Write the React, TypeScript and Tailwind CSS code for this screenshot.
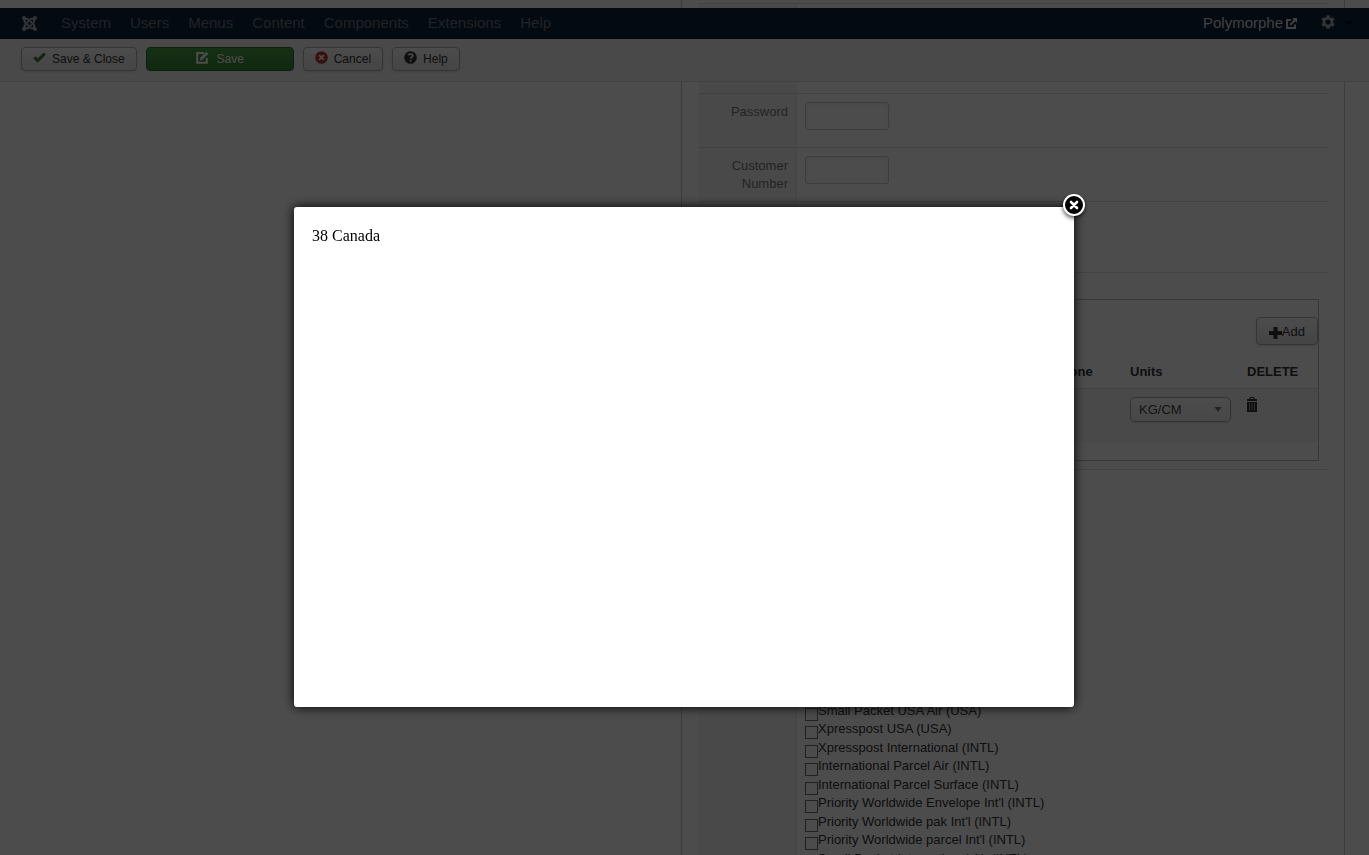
import React from "react";
import { FaJoomla } from "react-icons/fa";

const menu = ["System", "Users", "Menus", "Content", "Components", "Extensions", "Help"];

const services = [
  "Small Packet USA Air (USA)",
  "Xpresspost USA (USA)",
  "Xpresspost International (INTL)",
  "International Parcel Air (INTL)",
  "International Parcel Surface (INTL)",
  "Priority Worldwide Envelope Int'l (INTL)",
  "Priority Worldwide pak Int'l (INTL)",
  "Priority Worldwide parcel Int'l (INTL)",
  "Small Packet International Air (INTL)",
];

function ExternalIcon() {
  return (
    <svg width="11" height="11" viewBox="0 0 11 11" aria-hidden="true">
      <path d="M5 2H1v8h8V6.5M4.2 6.8L9 2" fill="none" stroke="#d9d9d9" strokeWidth="1.9" />
      <path d="M6 0h5v5z" fill="#d9d9d9" />
    </svg>
  );
}

function GearIcon() {
  return (
    <svg className="mb-0.5" width="14" height="14" viewBox="0 0 14 14" aria-hidden="true">
      <circle cx="7" cy="7" r="3.9" fill="none" stroke="#a9adb5" strokeWidth="2.6" />
      <path
        d="M7 .3v2.400M7 11.300v2.400M1.200 3.650l2.100 1.200M10.700 9.150l2.100 1.200M1.200 10.350l2.100-1.200M10.700 4.850l2.100-1.200"
        stroke="#a9adb5"
        strokeWidth="3.2"
      />
    </svg>
  );
}

function CheckIcon() {
  return (
    <svg width="13" height="11" viewBox="0 0 13 11" aria-hidden="true">
      <path d="M1.300 5.300l3.500 3.300L11.700 1.700" fill="none" stroke="#378137" strokeWidth="3.200" />
    </svg>
  );
}

function EditIcon() {
  return (
    <svg width="13" height="13" viewBox="0 0 13 13" aria-hidden="true">
      <path d="M8 1.900H1.200v9.900h9.600V7" fill="none" stroke="#fff" strokeWidth="2" />
      <path d="M3.800 9.400l.5-2.700L10.300.7l2.100 2.100-6 6z" fill="#fff" />
    </svg>
  );
}

function CancelIcon() {
  return (
    <svg width="13" height="13" viewBox="0 0 13 13" aria-hidden="true">
      <circle cx="6.500" cy="6.500" r="6.300" fill="#bd362f" />
      <path d="M4.100 4.100l4.800 4.800M8.900 4.100L4.100 8.900" stroke="#f5f5f5" strokeWidth="1.900" />
    </svg>
  );
}

function HelpIcon() {
  return (
    <svg width="13" height="13" viewBox="0 0 13 13" aria-hidden="true">
      <circle cx="6.500" cy="6.500" r="6.300" fill="#333" />
      <path d="M4.200 4.100c.6-1.400 4.600-1.500 4.600.8 0 1.400-2.200 1.300-2.200 2.900" fill="none" stroke="#f5f5f5" strokeWidth="1.700" />
      <path d="M5.700 8.900h1.800v1.700H5.700z" fill="#f5f5f5" />
    </svg>
  );
}

function PlusIcon() {
  return (
    <svg className="mt-0.5" width="13" height="12" viewBox="0 0 13 12" aria-hidden="true">
      <path d="M4.500 0h4v4H13v4H8.500v4h-4V8H0V4h4.500z" fill="#333" />
    </svg>
  );
}

function TrashIcon() {
  return (
    <svg width="10" height="15" viewBox="0 0 10 15" aria-hidden="true">
      <path d="M3 2V.500h4V2" fill="none" stroke="#333" />
      <path d="M0 2h10v2H0zM0 5h10v10H0z" fill="#333" />
      <path d="M2.500 6v7.500M5 6v7.500M7.500 6v7.500" stroke="#bbb" strokeWidth=".8" />
    </svg>
  );
}

const smallButton =
  "flex h-6 items-center gap-1.5 rounded-[4px] border border-[#b3b3b3] bg-linear-to-b from-white to-[#e6e6e6] px-[11px] text-xs text-[#333] shadow-sm [&>svg]:mb-[3px]";

function Row({ label, htmlFor, className = "", children }: { label?: string; htmlFor?: string; className?: string; children?: React.ReactNode }) {
  return (
    <div className={`grid grid-cols-[98px_minmax(0,1fr)] border-t border-[#ddd] ${className}`}>
      <div className="border-r border-[#e9e9e9] bg-[#f6f6f6] px-2 pt-[9px] text-right text-[#777]">
        {label && <label htmlFor={htmlFor}>{label}</label>}
      </div>
      <div className="p-2">{children}</div>
    </div>
  );
}

function Columns({ children }: { children: React.ReactNode }) {
  return (
    <div className="grid h-full grid-cols-[681fr_664fr] pr-6">
      <div />
      <div className="border-x border-[#ccc] pr-4 pl-[17px]">{children}</div>
    </div>
  );
}

const textInput = "block h-7 w-21 rounded-[3px] border border-[#ccc] bg-white px-1.5 shadow-inner";

export default function App() {
  return (
    <div className="relative flex h-screen flex-col overflow-hidden bg-white font-['Liberation_Sans',Arial,sans-serif] text-[13px] leading-[18px] text-[#333]">
      <div className="h-2 shrink-0 overflow-hidden">
        <Columns>
          <div className="h-[3px]" />
          <Row className="h-2" />
        </Columns>
      </div>

      <nav className="flex h-[31px] shrink-0 items-center border-b border-[#0d1b31] bg-[#10223e] pr-4 pl-[21px] text-[15px]">
        <a href="#home" aria-label="Control panel" className="mr-[23px] text-[#a9adb5]">
          <FaJoomla size={17} />
        </a>
        <ul className="flex flex-1 gap-[19px] text-[#6b727d]">
          {menu.map((m) => (
            <li key={m}>
              <a href={`#${m.toLowerCase()}`}>{m}</a>
            </li>
          ))}
        </ul>
        <a href="#site" className="mr-6 flex items-center gap-[3px] text-[#d9d9d9]">
          Polymorphe <ExternalIcon />
        </a>
        <button type="button" aria-label="User menu" className="flex items-center gap-[10px]">
          <GearIcon />
          <svg width="8" height="4" viewBox="0 0 8 4" aria-hidden="true">
            <path d="M0 0h8L4 4z" fill="#000" />
          </svg>
        </button>
      </nav>

      <div className="flex h-[43px] shrink-0 items-start gap-[9px] border-b border-[#ddd] bg-[#f5f5f5] pt-2 pl-[21px]">
        <button type="button" className={smallButton}>
          <CheckIcon /> Save &amp; Close
        </button>
        <button
          type="button"
          className="flex h-6 w-[148px] items-center justify-center gap-2 rounded-[4px] border border-[#2f6f2f] bg-linear-to-b from-[#46a546] to-[#378137] text-xs text-white [&>svg]:mb-[3px]"
        >
          <EditIcon /> Save
        </button>
        <button type="button" className={smallButton}>
          <CancelIcon /> Cancel
        </button>
        <button type="button" className={smallButton}>
          <HelpIcon /> Help
        </button>
      </div>

      <main className="min-h-0 flex-1">
        <Columns>
          <div className="flex h-full flex-col">
            <div className="grid h-[11px] shrink-0 grid-cols-[98px_minmax(0,1fr)]">
              <div className="border-r border-[#e9e9e9] bg-[#f6f6f6]" />
            </div>
            <Row label="Password" htmlFor="password" className="h-[54px] shrink-0">
              <input id="password" type="password" className={textInput} />
            </Row>
            <Row label="Customer Number" htmlFor="customer" className="h-[54px] shrink-0">
              <input id="customer" type="text" className={textInput} />
            </Row>
            <Row className="h-[71px] shrink-0" />
            <Row className="shrink-0">
              <div className="mt-[18px] mr-px border border-[#bbb] pt-[17px] pb-[17px]">
                <div className="flex justify-end">
                  <button
                    type="button"
                    className="flex h-7 items-center rounded-[4px] border border-[#b3b3b3] bg-linear-to-b from-white to-[#e6e6e6] px-3 pt-px shadow-sm"
                  >
                    <PlusIcon />
                    Add
                  </button>
                </div>
                <table className="mt-[9px] w-full table-fixed text-left">
                  <colgroup>
                    <col />
                    <col className="w-[77px]" />
                    <col className="w-[117px]" />
                    <col className="w-[79px]" />
                  </colgroup>
                  <thead>
                    <tr>
                      <td />
                      <th className="px-2 pt-[9px] pb-[7px] font-bold">Phone</th>
                      <th className="px-2 pt-[9px] pb-[7px] font-bold">Units</th>
                      <th className="px-2 pt-[9px] pb-[7px] font-bold">DELETE</th>
                    </tr>
                  </thead>
                  <tbody>
                    <tr className="h-[54px] border-t border-[#ddd] bg-[#f6f6f6] align-top">
                      <td />
                      <td />
                      <td className="p-2">
                        <div className="relative">
                          <select
                            aria-label="Units"
                            className="block h-[25px] w-full appearance-none rounded-[5px] border border-[#aaa] bg-linear-to-b from-white to-[#eee] px-2 pt-px text-[#444] shadow-sm"
                          >
                            <option>KG/CM</option>
                          </select>
                          <svg className="pointer-events-none absolute top-[10px] right-[9px]" width="8" height="5" viewBox="0 0 8 5" aria-hidden="true">
                            <path d="M.500 0h7L4 5z" fill="#777" />
                          </svg>
                        </div>
                      </td>
                      <td className="p-2">
                        <button type="button" aria-label="Delete" className="block">
                          <TrashIcon />
                        </button>
                      </td>
                    </tr>
                  </tbody>
                </table>
              </div>
            </Row>
            <Row className="min-h-0 flex-1">
              <ul className="mt-[224px] grid h-[167px] auto-rows-fr">
                {services.map((s) => (
                  <li key={s}>
                    <label className="flex items-start">
                      <input type="checkbox" className="mt-[6px] h-[13px] w-[13px] shrink-0 appearance-none border border-[#707070] bg-white" />
                      <span className="whitespace-nowrap">{s}</span>
                    </label>
                  </li>
                ))}
              </ul>
            </Row>
          </div>
        </Columns>
      </main>

      <div className="fixed inset-0 flex items-start justify-center bg-black/70 pt-[207px] pr-px">
        <div
          role="dialog"
          aria-label="Country"
          className="relative h-[500px] w-[780px] rounded-[3px] bg-white px-[18px] pt-5 font-['Liberation_Serif','Times_New_Roman',serif] text-base leading-[18px] text-black shadow-[0_0_12px_#000]"
        >
          38 Canada
          <button type="button" aria-label="Close" className="absolute -top-[15px] -right-[13px]">
            <svg className="drop-shadow-[0_2px_2px_rgba(0,0,0,0.7)]" width="26" height="26" viewBox="0 0 26 26" aria-hidden="true">
              <circle cx="13" cy="13" r="10" fill="#000" stroke="#fff" strokeWidth="2" />
              <path d="M10 10l6 6M16 10l-6 6" stroke="#fff" strokeWidth="2.600" strokeLinecap="round" />
            </svg>
          </button>
        </div>
      </div>
    </div>
  );
}
